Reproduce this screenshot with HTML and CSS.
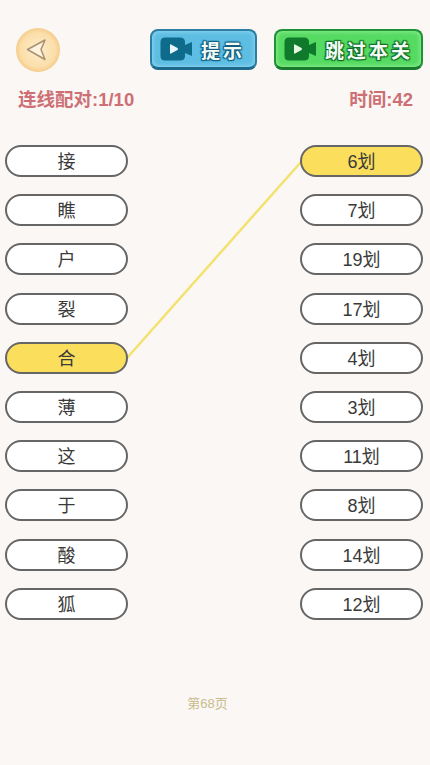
FILE: index.html
```html
<!DOCTYPE html>
<html lang="zh-CN">
<head>
    <meta charset="UTF-8">
    <meta name="viewport" content="width=device-width, initial-scale=1.0">
    <title>连线配对</title>
    <link rel="stylesheet" href="styles.css">
</head>
<body>
    <div id="game">
        <div class="toolbar">
            <button class="back">
                <svg width="24" height="24" viewBox="0 0 24 24">
                    <path d="M1.5 11.5 L19 2 L15 11.5 L19 21.5 Z" fill="#fdf3de" stroke="#a89272" stroke-width="1.5" stroke-linejoin="round"/>
                </svg>
            </button>
            <button class="action hint">
                <svg class="video" width="32" height="24" viewBox="0 0 32 24">
                    <path d="M5 0.5 H20 Q25 0.5 25 5 V8 L32 5 V19 L25 16 V19 Q25 23.5 20 23.5 H5 Q0.5 23.5 0.5 19 V5 Q0.5 0.5 5 0.5 Z" fill="#0f6b8c"/>
                    <path d="M10 8 Q10 7 11 7.5 L17.5 11 Q18.5 12 17.5 13 L11 16.5 Q10 17 10 16 Z" fill="#e8f6fb"/>
                </svg>
                <span>提示</span>
            </button>
            <button class="action skip">
                <svg class="video" width="32" height="24" viewBox="0 0 32 24">
                    <path d="M5 0.5 H20 Q25 0.5 25 5 V8 L32 5 V19 L25 16 V19 Q25 23.5 20 23.5 H5 Q0.5 23.5 0.5 19 V5 Q0.5 0.5 5 0.5 Z" fill="#0f7a2c"/>
                    <path d="M10 8 Q10 7 11 7.5 L17.5 11 Q18.5 12 17.5 13 L11 16.5 Q10 17 10 16 Z" fill="#e6f8e4"/>
                </svg>
                <span>跳过本关</span>
            </button>
        </div>

        <div class="status">
            <span>连线配对:1/10</span>
            <span>时间:42</span>
        </div>

        <div id="board">
            <svg class="link" width="430" height="260" viewBox="0 0 430 260">
                <line x1="127" y1="213" x2="301" y2="17" stroke="#f3e26e" stroke-width="2.5"/>
            </svg>
            <div class="column">
                <div class="cell">接</div>
                <div class="cell">瞧</div>
                <div class="cell">户</div>
                <div class="cell">裂</div>
                <div class="cell selected">合</div>
                <div class="cell">薄</div>
                <div class="cell">这</div>
                <div class="cell">于</div>
                <div class="cell">酸</div>
                <div class="cell">狐</div>
            </div>
            <div class="column">
                <div class="cell selected">6划</div>
                <div class="cell">7划</div>
                <div class="cell">19划</div>
                <div class="cell">17划</div>
                <div class="cell">4划</div>
                <div class="cell">3划</div>
                <div class="cell">11划</div>
                <div class="cell">8划</div>
                <div class="cell">14划</div>
                <div class="cell">12划</div>
            </div>
        </div>

        <div class="page">第68页</div>
    </div>
</body>
</html>
```

FILE: styles.css
```css
* {
    box-sizing: border-box;
}

html, body {
    margin: 0;
    height: 100%;
}

body {
    background-color: #fbf7f4;
    font-family: "Liberation Sans", "Noto Sans CJK SC", sans-serif;
    overflow: hidden;
}

#game {
    width: 430px;
    height: 765px;
    padding-top: 28px;
}

.toolbar {
    display: flex;
    align-items: flex-start;
    padding: 0 7px 0 16px;
}

button {
    border: none;
    padding: 0;
    font-family: inherit;
}

.back {
    width: 44px;
    height: 44px;
    border-radius: 50%;
    display: flex;
    justify-content: center;
    align-items: center;
    background: radial-gradient(circle at 50% 50%, #fdeccb 0, #fbdfab 55%, #f0b96c 86%, #d99f55 100%);
}

.action {
    height: 41px;
    margin-top: 1px;
    border-radius: 8px;
    display: flex;
    align-items: center;
    padding-left: 8px;
    color: #f4fbf4;
    font-size: 19px;
    font-weight: bold;
}

.action span {
    margin-left: 9px;
    letter-spacing: 3px;
}

.hint {
    width: 107px;
    margin-left: 90px;
    background-color: #5dbde2;
    border: 2px solid #2c7ea3;
    border-bottom: 3px solid #1f6a8c;
    box-shadow: inset 0 0 5px #9fe0f5;
}

.hint span {
    text-shadow: 0 0 2px #0f5f80, 1px 1px 1px #0f5f80, -1px -1px 1px #0f5f80, 1px -1px 1px #0f5f80, -1px 1px 1px #0f5f80;
}

.skip {
    width: 149px;
    margin-left: 17px;
    background-color: #55da62;
    border: 2px solid #1f9136;
    border-bottom: 3px solid #187a2c;
    box-shadow: inset 0 0 5px #a5f2a0;
}

.skip span {
    text-shadow: 0 0 2px #0f6f28, 1px 1px 1px #0f6f28, -1px -1px 1px #0f6f28, 1px -1px 1px #0f6f28, -1px 1px 1px #0f6f28;
}

.status {
    display: flex;
    justify-content: space-between;
    margin-top: 18px;
    padding: 0 17px 0 18px;
    color: #cd6f74;
    font-size: 18.5px;
    font-weight: bold;
    line-height: 20px;
}

#board {
    position: relative;
    display: flex;
    justify-content: space-between;
    margin-top: 35px;
    padding: 0 7px 0 5px;
}

.link {
    position: absolute;
    top: 0;
    left: 0;
}

.column {
    display: flex;
    flex-direction: column;
    gap: 17.2px;
}

.cell {
    position: relative;
    width: 123px;
    height: 32px;
    display: flex;
    justify-content: center;
    align-items: center;
    padding-bottom: 2px;
    background-color: #fff;
    border: 2px solid #666;
    border-radius: 16px;
    color: #3a3a3a;
    font-size: 18px;
}

.cell.selected {
    background-color: #fbdf5c;
}

.page {
    margin-top: 76px;
    padding-right: 15px;
    text-align: center;
    color: #c9bc8d;
    font-size: 13px;
    line-height: 16px;
}
```
